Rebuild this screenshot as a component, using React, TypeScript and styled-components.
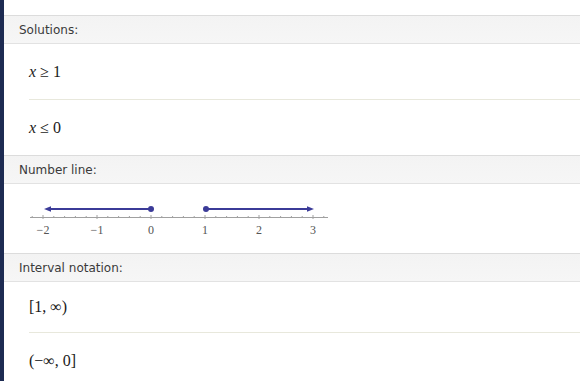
import styled, { createGlobalStyle } from "styled-components";

const GlobalStyle = createGlobalStyle`
  html, body {
    margin: 0;
    padding: 0;
    background: #ffffff;
  }
`;

type Tick = { x: number; major: boolean };

const unit = 54;
const zeroX = 147;

const ticks: Tick[] = [];
for (let i = -11; i <= 16; i++) {
  ticks.push({ x: zeroX + (i * unit) / 5, major: i % 5 === 0 });
}

const labels = [-2, -1, 0, 1, 2, 3];

export default function App() {
  return (
    <>
      <GlobalStyle />
      <Page>
        <SideBar />
        <Main>
          <Pod>
            <PodHeader>Solutions:</PodHeader>
            <MathRow $height={55}>
              <Var>x</Var>&nbsp;≥&nbsp;1
            </MathRow>
            <MathRow $height={55} $divider>
              <Var>x</Var>&nbsp;≤&nbsp;0
            </MathRow>
          </Pod>
          <Pod>
            <PodHeader>Number line:</PodHeader>
            <LineArea>
              <svg width="340" height="69" viewBox="0 0 340 69">
                <line x1="26" y1="33.5" x2="324" y2="33.5" stroke="#a0a0a0" strokeWidth="1" />
                {ticks.map((t) => (
                  <line
                    key={t.x}
                    x1={t.x}
                    x2={t.x}
                    y1={t.major ? 31 : 32}
                    y2={t.major ? 35 : 33.5}
                    stroke="#a0a0a0"
                    strokeWidth="1"
                  />
                ))}
                {labels.map((n) => (
                  <text
                    key={n}
                    x={zeroX + n * unit}
                    y="49.5"
                    textAnchor="middle"
                    fontFamily="'Liberation Serif', serif"
                    fontSize="12"
                    fill="#555"
                  >
                    {n < 0 ? `−${-n}` : n}
                  </text>
                ))}
                <line x1="44" y1="25" x2="147" y2="25" stroke="#3b3b98" strokeWidth="2" />
                <polygon points="40,25 47,22.3 47,27.7" fill="#3b3b98" />
                <circle cx="147" cy="25" r="3" fill="#3b3b98" />
                <line x1="202" y1="25" x2="305" y2="25" stroke="#3b3b98" strokeWidth="2" />
                <polygon points="310,25 303,22.3 303,27.7" fill="#3b3b98" />
                <circle cx="202" cy="25" r="3" fill="#3b3b98" />
              </svg>
            </LineArea>
          </Pod>
          <Pod>
            <PodHeader>Interval notation:</PodHeader>
            <MathRow $height={50}>[1, ∞)</MathRow>
            <MathRow $height={55} $divider>
              (−∞, 0]
            </MathRow>
          </Pod>
        </Main>
      </Page>
    </>
  );
}

const Page = styled.div`
  display: flex;
  width: 580px;
  height: 381px;
  overflow: hidden;
`;

const SideBar = styled.div`
  width: 4px;
  flex-shrink: 0;
  background: #1d2b52;
`;

const Main = styled.div`
  flex: 1;
  padding-top: 15px;
`;

const Pod = styled.section`
  display: flex;
  flex-direction: column;
`;

const PodHeader = styled.div`
  height: 27px;
  flex-shrink: 0;
  display: flex;
  align-items: center;
  padding-left: 15px;
  background: linear-gradient(#f3f3f3, #f6f6f6);
  border-top: 1px solid #dcdcdc;
  border-bottom: 1px solid #e2e2e2;
  font-family: "DejaVu Sans", Verdana, sans-serif;
  font-size: 12px;
  color: #3a3a3a;
`;

const MathRow = styled.div<{ $height: number; $divider?: boolean }>`
  box-sizing: border-box;
  height: ${(p) => p.$height + (p.$divider ? 1 : 0)}px;
  flex-shrink: 0;
  display: flex;
  align-items: center;
  margin-left: 25px;
  border-top: ${(p) => (p.$divider ? "1px solid #e8e8dc" : "none")};
  font-family: "Liberation Serif", "Times New Roman", serif;
  font-size: 16px;
  color: #1a1a1a;
`;

const Var = styled.i`
  font-style: italic;
`;

const LineArea = styled.div`
  height: 69px;
  flex-shrink: 0;
  display: flex;
  svg {
    display: block;
  }
`;
